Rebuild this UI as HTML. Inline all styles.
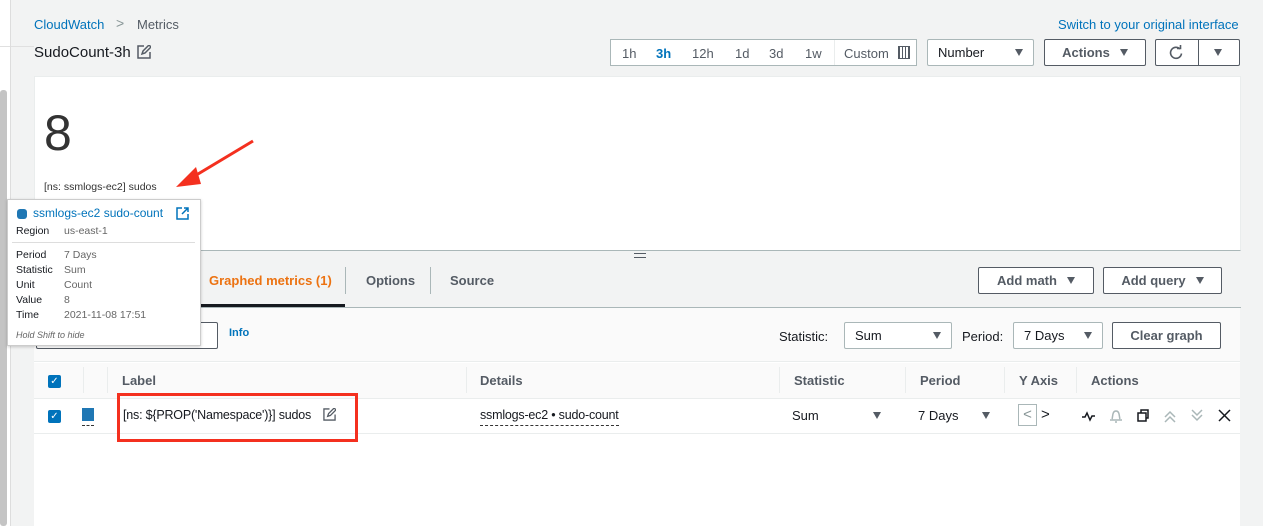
<!DOCTYPE html>
<html><head><style>
*{box-sizing:border-box;margin:0;padding:0}
body{width:1263px;height:526px;overflow:hidden;background:#f2f3f3;font-family:"Liberation Sans",sans-serif;color:#16191f;position:relative;font-size:13px}
.a{position:absolute}
.btn{position:absolute;border:1px solid #545b64;background:#fff;border-radius:2px;font-weight:bold;font-size:13px;color:#545b64;display:flex;align-items:center;justify-content:center}
.tri{display:inline-block;width:0;height:0;border-left:4px solid transparent;border-right:4px solid transparent;border-top:7px solid #545b64;margin-left:10px}
.sel{position:absolute;border:1px solid #aab7b8;background:#fff;border-radius:2px;font-size:13px;display:flex;align-items:center;padding-left:10px}
.sel .tri{position:absolute;right:10px;margin:0}
.th{position:absolute;top:373px;font-weight:bold;color:#545b64;font-size:13px}
.cb{position:absolute;width:13px;height:13px;background:#0073bb;border-radius:2px;color:#fff;font-size:10px;line-height:13px;text-align:center}
</style></head><body>
<div class="a" style="left:0;top:0;width:10px;height:526px;background:#fff"></div>
<div class="a" style="left:0;top:46px;width:34px;height:1px;background:#e0e0e0"></div>
<div class="a" style="left:0;top:90px;width:7px;height:436px;background:#c4c4c4;border-radius:3px"></div>
<div class="a" style="left:10px;top:0;width:1px;height:526px;background:#ddd"></div>
<div class="a" style="left:34px;top:17px;font-size:13px;color:#0073bb">CloudWatch</div>
<div class="a" style="left:116px;top:15px;font-size:14px;color:#879596">&gt;</div>
<div class="a" style="left:137px;top:17px;font-size:13px;color:#545b64">Metrics</div>
<div class="a" style="left:34px;top:44px;font-size:15px;color:#16191f">SudoCount-3h</div>
<svg class="a" style="left:137px;top:45px" width="14" height="14" viewBox="0 0 14 14" fill="none" stroke="#545b64" stroke-width="1.5"><path d="M7 1H1v12h12V7"/><path d="M5 9l1-3 6-6 2 2-6 6z"/></svg>
<div class="a" style="left:1058px;top:17px;font-size:13px;color:#0073bb">Switch to your original interface</div>
<div class="a" style="left:610px;top:39px;width:307px;height:27px;border:1px solid #aab7b8;background:#fff;font-size:13px;color:#545b64">
<span class="a" style="left:11px;top:6px">1h</span><span class="a" style="left:45px;top:6px;color:#0073bb;font-weight:bold">3h</span><span class="a" style="left:81px;top:6px">12h</span><span class="a" style="left:124px;top:6px">1d</span><span class="a" style="left:158px;top:6px">3d</span><span class="a" style="left:194px;top:6px">1w</span>
<span class="a" style="left:223px;top:0;width:1px;height:25px;background:#eaeded"></span>
<span class="a" style="left:233px;top:6px">Custom</span><span class="a" style="left:287px;top:6px;width:12px;height:13px;border:1px solid #545b64;background:repeating-linear-gradient(90deg,#545b64 0 1px,#fff 1px 3px)"></span></div>
<div class="sel" style="left:927px;top:39px;width:107px;height:27px">Number<span class="tri"></span></div>
<div class="btn" style="left:1044px;top:39px;width:102px;height:27px">Actions<span class="tri"></span></div>
<div class="btn" style="left:1155px;top:39px;width:85px;height:27px;justify-content:flex-start"><svg style="margin-left:13px" width="14" height="15" viewBox="0 0 14 15" fill="none" stroke="#545b64" stroke-width="1.6"><path d="M11 4A5.5 5.5 0 1 0 12.5 8.5"/><path d="M8 3.5h3.5V0"/></svg><span class="a" style="left:42px;top:0;width:1px;height:25px;background:#545b64"></span><span class="tri" style="margin-left:31px"></span></div>
<div class="a" style="left:34px;top:76px;width:1207px;height:175px;background:#fff;border:1px solid #eaeded;border-bottom:1px solid #aab7b8"></div>
<div class="a" style="left:44px;top:104px;font-size:50px;color:#333">8</div>
<div class="a" style="left:44px;top:181px;font-size:10.5px;color:#333">[ns: ssmlogs-ec2] sudos</div>
<svg class="a" style="left:170px;top:138px" width="86" height="52"><line x1="83" y1="3" x2="18" y2="42" stroke="#f4301f" stroke-width="3"/><polygon points="6,49 26,29 31,46" fill="#f4301f"/></svg>
<div class="a" style="left:634px;top:253px;width:12px;border-top:1px solid #545b64;border-bottom:1px solid #545b64;height:5px"></div>
<div class="a" style="left:209px;top:273px;font-weight:bold;color:#ec7211">Graphed metrics (1)</div>
<div class="a" style="left:200px;top:304px;width:145px;height:3px;background:#16191f"></div>
<div class="a" style="left:345px;top:267px;width:1px;height:27px;background:#aab7b8"></div>
<div class="a" style="left:366px;top:273px;font-weight:bold;color:#545b64">Options</div>
<div class="a" style="left:430px;top:267px;width:1px;height:27px;background:#aab7b8"></div>
<div class="a" style="left:450px;top:273px;font-weight:bold;color:#545b64">Source</div>
<div class="btn" style="left:978px;top:267px;width:116px;height:27px">Add math<span class="tri"></span></div>
<div class="btn" style="left:1103px;top:267px;width:119px;height:27px">Add query<span class="tri"></span></div>
<div class="a" style="left:34px;top:307px;width:1207px;height:1px;background:#aab7b8"></div>
<div class="a" style="left:34px;top:308px;width:1206px;height:218px;background:#fff"></div>
<div class="a" style="left:34px;top:308px;width:1206px;height:54px;background:#fafafa;border-bottom:1px solid #eaeded"></div>
<div class="a" style="left:36px;top:322px;width:182px;height:27px;border:1px solid #545b64;background:#fff;border-radius:2px"></div>
<div class="a" style="left:229px;top:327px;font-weight:bold;color:#0073bb;font-size:11px">Info</div>
<div class="a" style="left:779px;top:329px">Statistic:</div>
<div class="sel" style="left:844px;top:322px;width:108px;height:27px">Sum<span class="tri"></span></div>
<div class="a" style="left:962px;top:329px">Period:</div>
<div class="sel" style="left:1013px;top:322px;width:90px;height:27px">7 Days<span class="tri"></span></div>
<div class="btn" style="left:1112px;top:322px;width:109px;height:27px">Clear graph</div>
<div class="a" style="left:34px;top:363px;width:1206px;height:36px;background:#fafafa;border-bottom:1px solid #eaeded"></div>
<div class="cb" style="left:48px;top:375px">✓</div>
<div class="a" style="left:83px;top:367px;width:1px;height:26px;background:#eaeded"></div>
<div class="a" style="left:107px;top:367px;width:1px;height:26px;background:#eaeded"></div>
<div class="th" style="left:122px">Label</div>
<div class="a" style="left:466px;top:367px;width:1px;height:26px;background:#eaeded"></div>
<div class="th" style="left:480px">Details</div>
<div class="a" style="left:779px;top:367px;width:1px;height:26px;background:#eaeded"></div>
<div class="th" style="left:794px">Statistic</div>
<div class="a" style="left:905px;top:367px;width:1px;height:26px;background:#eaeded"></div>
<div class="th" style="left:920px">Period</div>
<div class="a" style="left:1004px;top:367px;width:1px;height:26px;background:#eaeded"></div>
<div class="th" style="left:1019px">Y Axis</div>
<div class="a" style="left:1076px;top:367px;width:1px;height:26px;background:#eaeded"></div>
<div class="th" style="left:1091px">Actions</div>
<div class="a" style="left:34px;top:433px;width:1206px;height:1px;background:#eaeded"></div>
<div class="cb" style="left:48px;top:410px">✓</div>
<div class="a" style="left:82px;top:408px;width:12px;height:13px;background:#1f77b4"></div>
<div class="a" style="left:82px;top:425px;width:12px;border-top:1px dashed #333"></div>
<div class="a" style="left:123px;top:408px;font-size:12.5px;letter-spacing:-0.2px">[ns: ${PROP('Namespace')}] sudos</div>
<svg class="a" style="left:323px;top:408px" width="13" height="13" viewBox="0 0 14 14" fill="none" stroke="#545b64" stroke-width="1.4"><path d="M7 1H1v12h12V7"/><path d="M5 9l1-3 6-6 2 2-6 6z"/></svg>
<div class="a" style="left:117px;top:393px;width:241px;height:49px;border:3px solid #f4301f"></div>
<div class="a" style="left:480px;top:408px;border-bottom:1px dashed #333;padding-bottom:3px;font-size:12.5px;letter-spacing:-0.2px">ssmlogs-ec2 • sudo-count</div>
<div class="a" style="left:792px;top:408px">Sum</div><span class="tri a" style="left:873px;top:412px;margin:0"></span>
<div class="a" style="left:918px;top:408px">7 Days</div><span class="tri a" style="left:982px;top:412px;margin:0"></span>
<div class="a" style="left:1018px;top:404px;width:19px;height:22px;border:1px solid #aab7b8;color:#879596;text-align:center;line-height:20px;font-size:15px">&lt;</div>
<div class="a" style="left:1041px;top:406px;font-size:15px;color:#16191f">&gt;</div>
<svg class="a" style="left:1082px;top:409px" width="150" height="14" fill="none" stroke-width="1.5">
<path d="M0 8h3l2-4 3 7 2-4h3" stroke="#16191f"/>
<path d="M28 11h12M30 10c1-2 0-8 4-8s3 6 4 8M33 13h2" stroke="#aab7b8"/>
<rect x="56" y="4" width="8" height="8" stroke="#16191f"/><path d="M59 4V1h7v8h-2" stroke="#16191f"/>
<path d="M83 8l5-5 5 5M83 13l5-5 5 5" stroke="#aab7b8"/>
<path d="M110 1l5 5 5-5M110 6l5 5 5-5" stroke="#aab7b8"/>
<path d="M137 1l11 11M148 1l-11 11" stroke="#16191f"/></svg>
<div class="a" style="left:7px;top:199px;width:194px;height:147px;background:#fff;border:1px solid #ccc;box-shadow:0 1px 3px rgba(0,0,0,.2)">
<div class="a" style="left:9px;top:9px;width:10px;height:10px;border-radius:3px;background:#1f77b4"></div>
<div class="a" style="left:25px;top:6px;color:#0073bb;font-size:12px">ssmlogs-ec2 sudo-count</div>
<svg class="a" style="left:168px;top:7px" width="13" height="13" fill="none" stroke="#0073bb" stroke-width="1.5"><path d="M6 1H1v11h11V7M8 1h4v4M12 1L6 7"/></svg>
<div class="a" style="left:8px;top:25px;font-size:10.5px">Region</div><div class="a" style="left:56px;top:25px;font-size:10.5px;color:#666">us-east-1</div>
<div class="a" style="left:4px;top:42px;width:183px;height:1px;background:#ddd"></div>
<div class="a" style="left:8px;top:48px;font-size:10.5px;line-height:15px">Period<br>Statistic<br>Unit<br>Value<br>Time</div>
<div class="a" style="left:56px;top:48px;font-size:10.5px;line-height:15px;color:#666">7 Days<br>Sum<br>Count<br>8<br>2021-11-08 17:51</div>
<div class="a" style="left:8px;top:130px;font-size:9px;font-style:italic;color:#666">Hold Shift to hide</div>
</div>
</body></html>
